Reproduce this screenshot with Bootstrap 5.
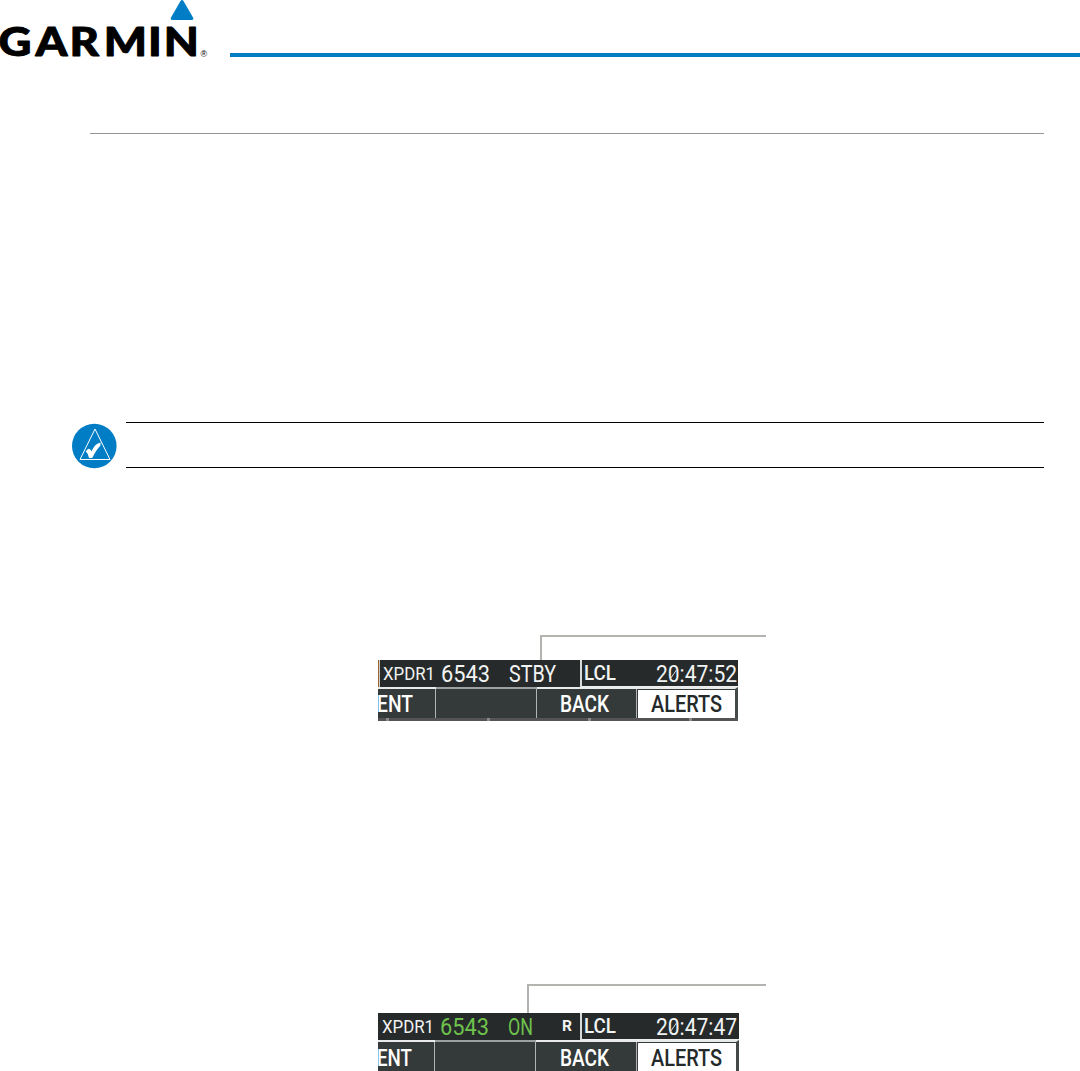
<!DOCTYPE html>
<html lang="en">
<head>
  <meta charset="UTF-8" />
  <meta name="viewport" content="width=device-width, initial-scale=1" />
  <title>Garmin Transponder Modes</title>
  <link rel="stylesheet" href="https://cdn.jsdelivr.net/npm/bootstrap@5.3.3/dist/css/bootstrap.min.css" />
  <style>
    body { width: 1080px; height: 1071px; overflow: hidden; background: #fff; font-family: Roboto, "Liberation Sans", sans-serif; }
    svg { display: block; overflow: visible; }
    .brand-logo { width: 230px; height: 60px; }
    .brand-name { font-family: Lato, "Liberation Sans", sans-serif; font-weight: 900; stroke: #000; stroke-width: .9; stroke-linejoin: round; }
    .brand-bar { height: 4px; margin-top: 53px; background: #007dc5; }
    .section-rule { height: 1px; margin: 73px 36px 0 90px; background: #939598; }
    .note { height: 46px; margin: 288px 36px 0 72px; }
    .note-icon { width: 54px; }
    .note-body { border-top: 1px solid #000; border-bottom: 1px solid #000; }

    .figure-block { width: 388px; margin-left: 378px; }
    .figure-standby { margin-top: 167px; }
    .figure-on { margin-top: 263px; }
    .callout { border: solid #b3b3b0; border-width: 2px 0 0 2px; }
    .figure-standby .callout { height: 25px; margin-left: 162px; }
    .figure-on .callout { height: 29px; margin-left: 149px; }

    .display { width: 360px; background: #34393a; }
    .figure-on .display { width: 361px; }
    .status-row { height: 27px; background: #262a2b; }
    .xpdr-cell { width: 202px; }
    .figure-standby .xpdr-cell { border-left: 1px solid #a2632b; box-shadow: inset 1px 0 #c9cccc; }
    .clock-cell { border-left: 2px solid #d8dada; border-bottom: 1px solid #eee; }
    .softkeys { height: 31px; }
    .figure-on .softkeys { height: 32px; }
    .key { border-top: 2px solid #e9eaea; box-shadow: inset -1px 0 #b0b4b4; background: #343939; }
    .key-blank { border-top-color: #9da1a1; }
    .key-white { border-right: 3px solid #44494a; background: #fff; box-shadow: inset 0 1px #34393a, inset 1px 0 #34393a; }
    .bezel { height: 3px; background: #555355; overflow: hidden; }
    .bezel i { flex: none; width: 3px; height: 3px; margin-right: 98px; background: #8b8a8a; }
    .bezel i:first-child { margin-left: 8px; }
    .bezel i:last-child { margin-right: 0; }
  </style>
</head>
<body>
  <header class="d-flex">
    <svg class="brand-logo flex-shrink-0" viewBox="0 0 230 60" role="img" aria-label="Garmin">
      <text class="brand-name" transform="scale(1.16 1)" x="-1.2 30.6 60 89.500 127.500 141.200" y="56.300" font-size="39.200">GARMIN</text>
      <path d="M180.5 1Q182 -1 183.5 1L193 17.5Q194 20 191.5 20H172.500Q170 20 171 17.500Z" fill="#007dc5" />
      <text x="200.500" y="57" font-size="9" font-family="Liberation Sans, sans-serif">®</text>
    </svg>
    <div class="brand-bar flex-grow-1"></div>
  </header>

  <main>
    <div class="section-rule"></div>

    <section class="note d-flex">
      <svg class="note-icon flex-shrink-0" viewBox="0 0 54 46">
        <circle cx="22.300" cy="24" r="22.300" fill="#007dc5" />
        <path d="M23 7L8 37.500H38Z" fill="none" stroke="#fff" stroke-width="1" />
        <path d="M14.500 29.500Q16.500 26 18.300 28.500L19.500 30.500C21.500 26 24 22 28 21.300L27.700 23.500C24 27 22 31 19.800 35.500L17.500 35.500C17 33 16 30.500 14.500 29.500Z" fill="#fff" stroke="#fff" stroke-width="1.200" />
      </svg>
      <div class="note-body flex-grow-1"></div>
    </section>

    <!-- Standby mode -->
    <section class="figure-block figure-standby">
      <div class="callout"></div>
      <div class="display">
        <div class="status-row d-flex">
          <div class="xpdr-cell flex-shrink-0">
            <svg width="200" height="26" fill="#f2f3f3">
              <text x="4" y="20" font-size="18.500" textLength="52" lengthAdjust="spacingAndGlyphs">XPDR1</text>
              <text x="62" y="22" font-size="24" textLength="49" lengthAdjust="spacingAndGlyphs">6543</text>
              <text x="130" y="22" font-size="24" textLength="47" lengthAdjust="spacingAndGlyphs">STBY</text>
            </svg>
          </div>
          <div class="clock-cell flex-grow-1">
            <svg width="156" height="25" fill="#f2f3f3">
              <text x="2" y="20" font-size="19.500" font-weight="500" textLength="32" lengthAdjust="spacingAndGlyphs">LCL</text>
              <text x="74" y="22" font-size="24" textLength="81" lengthAdjust="spacingAndGlyphs">20:47:52</text>
              <path d="M88.500 18.500L95.500 8.500" stroke="#d8dada" />
            </svg>
          </div>
        </div>
        <div class="softkeys d-flex">
          <div class="key" style="width: 58px">
            <svg width="56" height="28" fill="#fff"><text x="-1" y="22.800" font-size="24" font-weight="500" textLength="36" lengthAdjust="spacingAndGlyphs">ENT</text></svg>
          </div>
          <div class="key key-blank" style="width: 101px"></div>
          <div class="key" style="width: 100px">
            <svg width="98" height="28" fill="#fff"><text x="23" y="22.800" font-size="24" font-weight="500" textLength="49" lengthAdjust="spacingAndGlyphs">BACK</text></svg>
          </div>
          <div class="key key-white flex-grow-1">
            <svg width="97" height="28" fill="#24292a"><text x="14" y="22.800" font-size="24" font-weight="500" textLength="71" lengthAdjust="spacingAndGlyphs">ALERTS</text></svg>
          </div>
        </div>
        <div class="bezel d-flex"><i></i><i></i><i></i><i></i></div>
      </div>
    </section>

    <!-- On mode -->
    <section class="figure-block figure-on">
      <div class="callout"></div>
      <div class="display">
        <div class="status-row d-flex">
          <div class="xpdr-cell flex-shrink-0">
            <svg width="202" height="26" fill="#f2f3f3">
              <text x="4" y="20" font-size="18.500" textLength="52" lengthAdjust="spacingAndGlyphs">XPDR1</text>
              <g fill="#6fc24c">
                <text x="62" y="22" font-size="24" textLength="49" lengthAdjust="spacingAndGlyphs">6543</text>
                <text x="130" y="22" font-size="24" textLength="25" lengthAdjust="spacingAndGlyphs">ON</text>
              </g>
              <text x="184" y="18" font-size="14" font-weight="700" textLength="10" lengthAdjust="spacingAndGlyphs">R</text>
            </svg>
          </div>
          <div class="clock-cell flex-grow-1">
            <svg width="157" height="25" fill="#f2f3f3">
              <text x="2" y="20" font-size="19.500" font-weight="500" textLength="32" lengthAdjust="spacingAndGlyphs">LCL</text>
              <text x="74" y="22" font-size="24" textLength="81" lengthAdjust="spacingAndGlyphs">20:47:47</text>
              <path d="M88.500 18.500L95.500 8.500" stroke="#d8dada" />
            </svg>
          </div>
        </div>
        <div class="softkeys d-flex">
          <div class="key" style="width: 57px">
            <svg width="55" height="28" fill="#fff"><text x="-1" y="23.500" font-size="24" font-weight="500" textLength="35" lengthAdjust="spacingAndGlyphs">ENT</text></svg>
          </div>
          <div class="key key-blank" style="width: 101px"></div>
          <div class="key" style="width: 101px">
            <svg width="99" height="28" fill="#fff"><text x="24" y="23.500" font-size="24" font-weight="500" textLength="49" lengthAdjust="spacingAndGlyphs">BACK</text></svg>
          </div>
          <div class="key key-white flex-grow-1">
            <svg width="97" height="28" fill="#24292a"><text x="14" y="23.500" font-size="24" font-weight="500" textLength="71" lengthAdjust="spacingAndGlyphs">ALERTS</text></svg>
          </div>
        </div>
      </div>
    </section>
  </main>
  <script src="https://cdn.jsdelivr.net/npm/bootstrap@5.3.3/dist/js/bootstrap.bundle.min.js"></script>
</body>
</html>
